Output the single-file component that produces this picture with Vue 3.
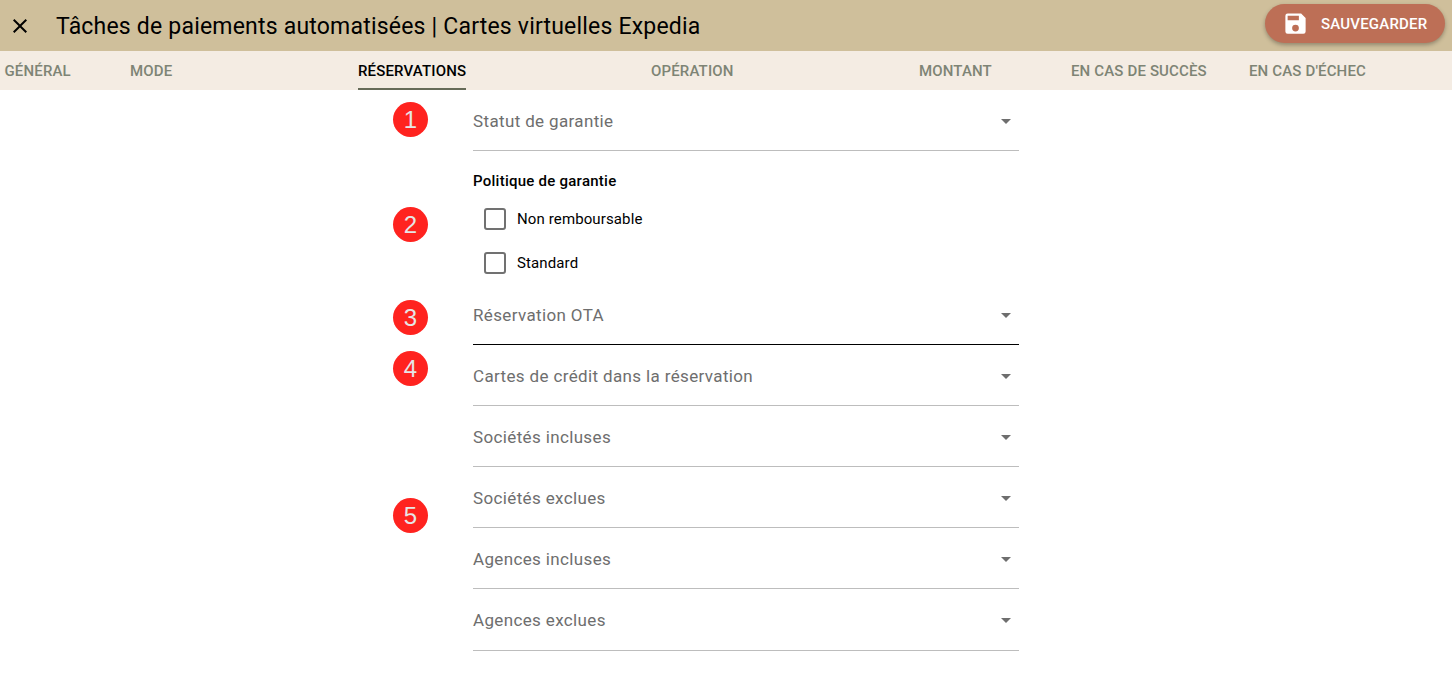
<template>
  <div class="page">
    <header class="topbar">
      <button class="close-btn" aria-label="Fermer">
        <svg width="24" height="24" viewBox="0 0 24 24"><path d="M19 6.41 17.59 5 12 10.59 6.41 5 5 6.41 10.59 12 5 17.59 6.41 19 12 13.41 17.59 19 19 17.59 13.41 12z" /></svg>
      </button>
      <h1 class="title">Tâches de paiements automatisées | Cartes virtuelles Expedia</h1>
      <button class="save-btn">
        <svg width="27" height="27" viewBox="0 0 24 24"><path d="M17 3H5a2 2 0 0 0-2 2v14a2 2 0 0 0 2 2h14a2 2 0 0 0 2-2V7l-4-4zm-5 16a3 3 0 1 1 0-6 3 3 0 0 1 0 6zm3-10H5V5h10v4z" /></svg>
        <span>SAUVEGARDER</span>
      </button>
    </header>

    <nav class="tabs">
      <span v-for="tab in tabs" :key="tab" class="tab" :class="{ active: tab === 'RÉSERVATIONS' }">{{ tab }}</span>
    </nav>

    <main class="form">
      <div class="field">
        <span>Statut de garantie</span><i class="caret"></i>
      </div>

      <div class="policy">
        <div class="policy-title">Politique de garantie</div>
        <label v-for="opt in policies" :key="opt" class="check">
          <span class="box"></span>{{ opt }}
        </label>
      </div>

      <div v-for="f in fields" :key="f" class="field" :class="{ focused: f === 'Réservation OTA' }">
        <span>{{ f }}</span><i class="caret"></i>
      </div>
    </main>

    <span v-for="b in badges" :key="b.n" class="badge" :style="{ top: b.top + 'px' }">{{ b.n }}</span>
  </div>
</template>

<script setup>
const tabs = ['GÉNÉRAL', 'MODE', 'RÉSERVATIONS', 'OPÉRATION', 'MONTANT', 'EN CAS DE SUCCÈS', "EN CAS D'ÉCHEC"]
const policies = ['Non remboursable', 'Standard']
const fields = [
  'Réservation OTA',
  'Cartes de crédit dans la réservation',
  'Sociétés incluses',
  'Sociétés exclues',
  'Agences incluses',
  'Agences exclues'
]
// annotation markers drawn over the screenshot
const badges = [
  { n: 1, top: 101.5 },
  { n: 2, top: 206.5 },
  { n: 3, top: 299.5 },
  { n: 4, top: 350.5 },
  { n: 5, top: 497.5 }
]
</script>

<style>
html, body {
  margin: 0;
  background: #fff;
}
</style>

<style scoped>
.page {
  position: relative;
  height: 692px;
  overflow: hidden;
  font-family: Roboto, "Liberation Sans", sans-serif;
}

.topbar {
  height: 51px;
  display: flex;
  align-items: center;
  background: #cfbf9b;
}

.close-btn {
  width: 24px;
  height: 24px;
  margin-left: 8px;
  padding: 0;
  border: 0;
  background: none;
  fill: #000;
}

.title {
  margin: 1px 0 0 24px;
  flex: 1;
  font-size: 23px;
  font-weight: 400;
  letter-spacing: 0.2px;
  color: #000;
}

.save-btn {
  align-self: flex-start;
  width: 180px;
  height: 39px;
  margin: 4px 7px 0 0;
  padding: 0 0 0 17px;
  display: flex;
  align-items: center;
  gap: 12px;
  border: 0;
  border-radius: 20px;
  background: #bd6f56;
  box-shadow: 0 2px 4px rgba(0, 0, 0, 0.3);
  color: #fff;
  fill: #fff;
  font: 500 15px Roboto, sans-serif;
  letter-spacing: 0.2px;
}

.tabs {
  height: 39px;
  padding-left: 4.5px;
  display: grid;
  grid-template-columns: 125.5px 228px 293px 268px 152px 178px 1fr;
  background: #f4ece3;
}

.tab {
  justify-self: start;
  line-height: 41px;
  font-size: 15px;
  font-weight: 500;
  letter-spacing: 0.15px;
  color: #7e8475;
}

.tab.active {
  height: 37px;
  color: #000;
  border-bottom: 2px solid #666b58;
}

.form {
  width: 546px;
  margin-left: 473px;
}

.field {
  height: 58px;
  padding-top: 2px;
  display: flex;
  align-items: center;
  justify-content: space-between;
  border-bottom: 1px solid #bdbdbd;
  font-size: 17px;
  letter-spacing: 0.36px;
  color: #6e6e6e;
}

.field:last-child {
  padding-bottom: 1px;
}

.field.focused {
  border-bottom-color: #000;
}

.caret {
  width: 0;
  height: 0;
  margin-right: 8px;
  border-left: 5px solid transparent;
  border-right: 5px solid transparent;
  border-top: 5px solid #6e6e6e;
}

.policy {
  padding-top: 21px;
  height: 133px;
  box-sizing: border-box;
}

.policy-title {
  height: 25px;
  font-size: 15px;
  font-weight: 500;
  letter-spacing: 0.25px;
  line-height: 18px;
  color: #000;
}

.check {
  height: 44px;
  display: flex;
  align-items: center;
  padding-left: 11px;
  font-size: 15px;
  letter-spacing: 0.12px;
  color: #000;
}

.box {
  width: 18px;
  height: 18px;
  margin-right: 11px;
  border: 2px solid #717171;
  border-radius: 3px;
}

.badge {
  position: absolute;
  left: 392.7px;
  width: 35.5px;
  height: 35.5px;
  border-radius: 50%;
  background: #ff231f;
  color: #e6e6e6;
  font: 400 24px/35.5px "Liberation Sans", sans-serif;
  text-align: center;
}
</style>
